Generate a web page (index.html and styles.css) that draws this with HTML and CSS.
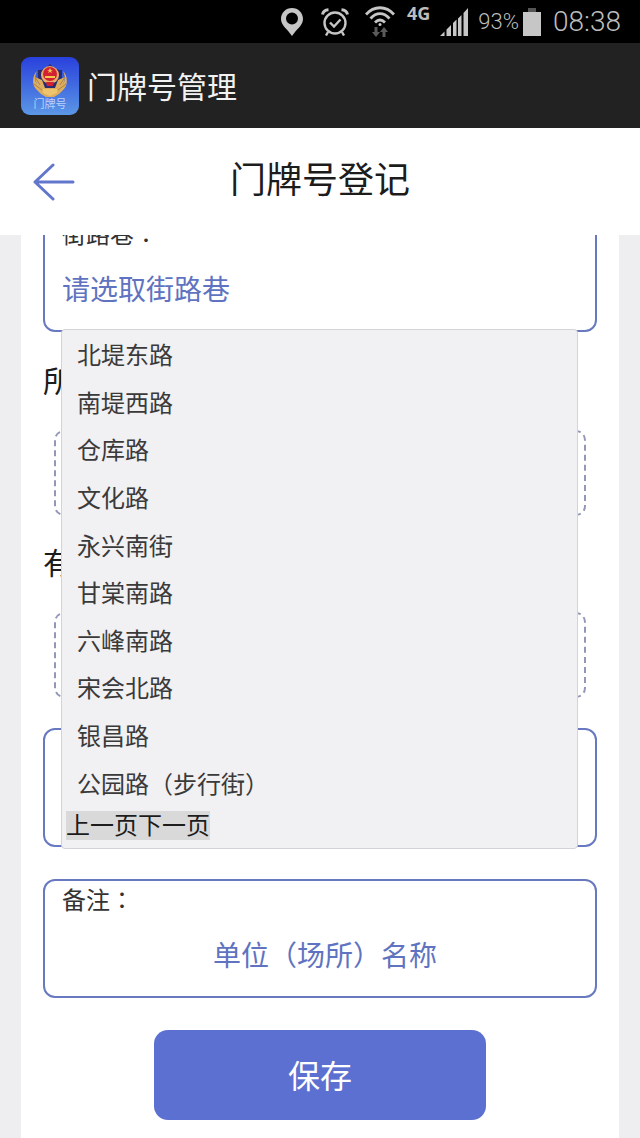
FILE: index.html
```html
<!DOCTYPE html>
<html lang="zh-CN">
<head>
  <meta charset="UTF-8">
  <meta name="viewport" content="width=device-width, initial-scale=1.0">
  <title>门牌号管理</title>
  <link rel="stylesheet" href="styles.css">
</head>
<body>
  <div class="status-bar">
    <svg class="icon-pin" width="22" height="28" viewBox="0 0 22 28">
      <path fill="#c6c6c6" fill-rule="evenodd" d="M11 0C4.800 0 0 4.800 0 11c0 6.500 6 9.500 11 17 5-7.500 11-10.500 11-17C22 4.800 17.200 0 11 0zm0 4.500a6 6 0 1 1 0 12 6 6 0 0 1 0-12z"/>
    </svg>
    <svg class="icon-alarm" width="28" height="28" viewBox="0 0 28 28" fill="none" stroke="#c6c6c6" stroke-width="2.400">
      <circle cx="14" cy="15" r="10.500"/>
      <path d="M9 14.500l4 4 6.500-7"/>
      <path d="M1.500 6.500C2 4 4.500 2 7.500 1.800M26.500 6.500C26 4 23.500 2 20.500 1.800" stroke-width="3"/>
      <path d="M7 24l-2 3.500M21 24l2 3.500"/>
    </svg>
    <svg class="icon-wifi" width="30" height="32" viewBox="0 0 30 32" fill="none" stroke="#c6c6c6" stroke-width="2.800">
      <path d="M1 8.500C9-.5 21-.5 29 8.500"/>
      <path d="M5.500 12.500c6-6.500 13-6.500 19 0"/>
      <path d="M10 16.500c3.500-3.500 6.500-3.500 10 0"/>
      <circle cx="15" cy="18.500" r="1.500" fill="#c6c6c6" stroke="none"/>
      <path fill="#5a5a5a" stroke="none" d="M9.500 21h3v5h2.500L11 31l-4-5h2.500zM17.500 31h3v-5H23l-4-5-4 5h2.500z"/>
    </svg>
    <span class="network">4G</span>
    <svg class="icon-signal" width="28" height="28" viewBox="0 0 28 28" fill="#c6c6c6">
      <path d="M0 28l4.500-4.500V28zM6.500 21.500L11 17v11H6.500zM13 15l3.500-3.500V28H13zM18 10.500L21.500 7v21H18zM23.500 5L28 0v28h-4.500z"/>
    </svg>
    <span class="percent">93%</span>
    <svg class="icon-battery" width="18" height="28" viewBox="0 0 18 28">
      <path fill="#555" d="M5 0h8v4H5z"/>
      <path fill="#c6c6c6" d="M0 4h18v24H0z"/>
    </svg>
    <span class="clock">08:38</span>
  </div>

  <div class="app-bar">
    <svg class="app-icon" width="58" height="58" viewBox="0 0 58 58">
      <defs>
        <linearGradient id="icon-bg" x1="0" y1="0" x2="0" y2="1">
          <stop offset="0" stop-color="#2940dc"/>
          <stop offset="1" stop-color="#5b97e6"/>
        </linearGradient>
      </defs>
      <rect width="58" height="58" rx="9" fill="url(#icon-bg)"/>
      <path fill="#2a2c72" d="M17 13c5 0 8-2 12-6 4 4 7 6 12 6v13c0 5-5 10-12 13-7-3-12-8-12-13z"/>
      <path fill="#dcae5d" d="M16 14c-4 8-1 15 6 18h14c7-3 10-10 6-18 5 5 5 14 1 18l-5 5-5 3H25l-5-3-5-5c-4-4-4-13 1-18z"/>
      <path fill="#dcae5d" d="M14 20l7 3 3 8h10l3-8 7-3-3 13-12 6-12-6z"/>
      <path fill="none" stroke="#ad8146" d="M14 20l5 8M13 27l8 6M44 20l-5 8M45 27l-8 6"/>
      <circle cx="29" cy="18" r="9" fill="#e9ad69"/>
      <circle cx="29" cy="17" r="7" fill="#d32132"/>
      <path fill="#f4c84d" d="M29 11l1 2h2l-2 1 1 2-2-1-2 1 1-2-2-1h2zM24 19h10v2H24z"/>
      <path fill="#d32132" d="M25 25h8l-1 4h-6z"/>
      <path fill="#f0c36d" d="M22 32h14v4l-7 3-7-3z"/>
      <text x="29" y="51" class="app-icon-text" text-anchor="middle">门牌号</text>
    </svg>
    <span class="app-name">门牌号管理</span>
  </div>

  <header class="page-header">
    <a class="back" href="#" aria-label="返回">
      <svg width="42" height="40" viewBox="0 0 42 40" fill="none" stroke="#6276cc" stroke-width="3" stroke-linecap="round" stroke-linejoin="round">
        <path d="M40 20H2M20 3L2 20l18 17"/>
      </svg>
    </a>
    <h1>门牌号登记</h1>
  </header>

  <main class="content">
    <form class="form">
      <div class="field field-street">
        <label for="street">街路巷<span class="colon" lang="zh-TW">：</span></label>
        <input type="text" id="street" placeholder="请选取街路巷" readonly>

        <div class="dropdown">
          <ul class="street-list">
            <li><button type="button">北堤东路</button></li>
            <li><button type="button">南堤西路</button></li>
            <li><button type="button">仓库路</button></li>
            <li><button type="button">文化路</button></li>
            <li><button type="button">永兴南街</button></li>
            <li><button type="button">甘棠南路</button></li>
            <li><button type="button">六峰南路</button></li>
            <li><button type="button">宋会北路</button></li>
            <li><button type="button">银昌路</button></li>
            <li><button type="button">公园路（步行街）</button></li>
          </ul>
          <div class="pager">
            <button type="button">上一页</button><button type="button">下一页</button>
          </div>
        </div>
      </div>

      <h2>所</h2>
      <div class="dashed-box"></div>

      <h2>有</h2>
      <div class="dashed-box"></div>

      <div class="field"></div>

      <div class="field">
        <label for="remark">备注<span class="colon" lang="zh-TW">：</span></label>
        <input type="text" id="remark" class="centered" placeholder="单位（场所）名称">
      </div>

      <button type="submit" class="save">保存</button>
    </form>
  </main>
</body>
</html>
```
FILE: styles.css
```css
* {
  box-sizing: border-box;
}

body {
  display: flex;
  flex-direction: column;
  min-height: 100vh;
  margin: 0;
  background-color: #eeedef;
  color: #333;
  font-family: "Noto Sans CJK SC", sans-serif;
}

button,
input {
  font-family: inherit;
}

/* status bar */
.status-bar {
  display: flex;
  align-items: center;
  justify-content: flex-end;
  height: 43px;
  padding: 0 19px;
  background-color: #000;
  color: #bdbdbd;
  font-family: Roboto, sans-serif;
}

.icon-alarm {
  margin-left: 18px;
}

.icon-wifi {
  margin-left: 16px;
}

.network {
  align-self: flex-start;
  margin-left: 12px;
  padding-top: 3px;
  font-family: "Open Sans", sans-serif;
  font-size: 18px;
  font-weight: 700;
  line-height: 20px;
}

.icon-signal {
  margin-left: 10px;
}

.percent {
  margin-left: 10px;
  font-size: 22px;
  font-weight: 300;
}

.icon-battery {
  margin-left: 4px;
}

.clock {
  margin-left: 12px;
  font-size: 28px;
  font-weight: 300;
}

/* app title */
.app-bar {
  display: flex;
  align-items: center;
  gap: 8px;
  height: 85px;
  padding: 0 21px;
  background-color: #222;
}

.app-icon-text {
  fill: #b9d0fa;
  font-size: 11px;
}

.app-name {
  padding-bottom: 2px;
  color: #f2f2f2;
  font-size: 30px;
  line-height: 40px;
}

/* page header */
.page-header {
  display: grid;
  grid-template-columns: 42px 1fr 42px;
  align-items: center;
  height: 107px;
  padding: 0 33px;
  background-color: #fff;
}

.back {
  display: flex;
}

.page-header h1 {
  margin: 0;
  padding-bottom: 10px;
  color: #1c1c1c;
  font-size: 36px;
  font-weight: 400;
  line-height: 48px;
  text-align: center;
}

/* form, scrolled under the header */
.content {
  flex: 1;
  margin: 0 21px;
  padding: 0 22px 17px;
  background-color: #fff;
  overflow: hidden;
}

.form {
  display: flex;
  flex-direction: column;
}

.field {
  min-height: 119px;
  margin-bottom: 32px;
  padding: 0 17px;
  border: 2px solid #6879bf;
  border-radius: 12px;
}

.field-street {
  position: relative;
  margin-top: -22px;
}

.field label {
  display: block;
  font-size: 24px;
  line-height: 36px;
}

.colon {
  font-family: "Noto Sans CJK TC", sans-serif;
}

.field input {
  display: block;
  width: 100%;
  height: 40px;
  margin-top: 17px;
  padding: 0;
  border: none;
  outline: none;
  background: none;
  color: #6073c0;
  font-size: 28px;
}

.field input::placeholder {
  color: #6073c0;
}

.field .centered {
  padding-left: 10px;
  text-align: center;
}

.form h2 {
  margin: 0;
  color: #1c1c1c;
  font-size: 30px;
  font-weight: 400;
  line-height: 30px;
}

.dashed-box {
  height: 86px;
  margin: 36px 11px 30px;
  border: 2px dashed #9297b8;
  border-radius: 10px;
}

/* street dropdown */
.dropdown {
  position: absolute;
  z-index: 1;
  top: calc(100% - 1px);
  right: 17px;
  left: 16px;
  padding: 0 4px 8px;
  border: 1px solid #d3d3d8;
  border-radius: 4px;
  background-color: #f1f0f3;
}

.street-list {
  display: grid;
  grid-auto-rows: 1fr;
  height: 476px;
  margin: 0;
  padding: 0;
  list-style: none;
}

.street-list li {
  display: flex;
}

.street-list button {
  flex: 1;
  padding: 0 11px;
  border: none;
  background: none;
  color: #3a3a3a;
  font-size: 24px;
  text-align: left;
}

.pager {
  display: flex;
  margin-top: 5px;
}

.pager button {
  height: 29px;
  padding: 0 0 3px;
  border: none;
  background-color: #d9d9da;
  color: #1c1c1c;
  font-size: 24px;
  line-height: 26px;
}

.save {
  align-self: center;
  width: 60%;
  height: 90px;
  padding: 0 0 2px;
  border: none;
  border-radius: 14px;
  background-color: #5b70d0;
  color: #fff;
  font-size: 32px;
}
```
